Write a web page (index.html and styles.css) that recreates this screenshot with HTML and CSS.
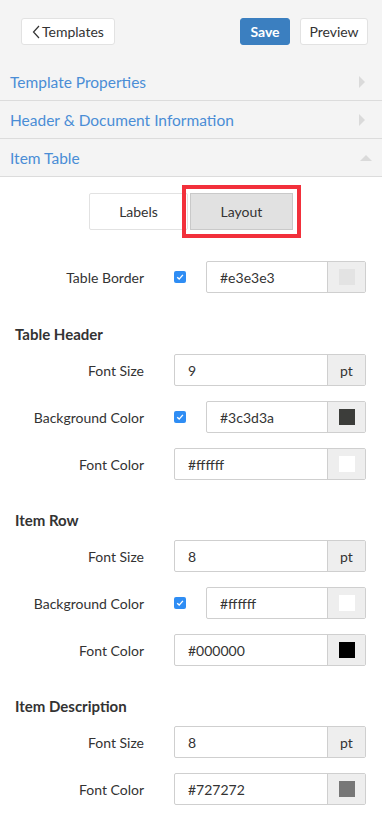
FILE: index.html
```html
<!DOCTYPE html>
<html lang="en">
<head>
    <meta charset="UTF-8">
    <meta name="viewport" content="width=device-width, initial-scale=1.0">
    <title>Item Table Layout</title>
    <link rel="stylesheet" href="styles.css">
</head>
<body>
    <!-- Top toolbar -->
    <div class="toolbar">
        <a href="#" class="btn btn-back">
            <svg width="8" height="14" viewBox="0 0 8 14"><path d="M7 1 L1.5 7 L7 13" fill="none" stroke="#333" stroke-width="1.2"/></svg>
            Templates
        </a>
        <div class="toolbar-right">
            <a href="#" class="btn btn-save">Save</a>
            <a href="#" class="btn">Preview</a>
        </div>
    </div>

    <!-- Accordion -->
    <div class="acc-row">
        <span class="acc-title">Template Properties</span>
        <span class="caret-right"></span>
    </div>
    <div class="acc-row">
        <span class="acc-title">Header &amp; Document Information</span>
        <span class="caret-right"></span>
    </div>
    <div class="acc-row">
        <span class="acc-title">Item Table</span>
        <span class="caret-up"></span>
    </div>

    <div class="panel">
        <div class="tabs">
            <button class="tab">Labels</button>
            <button class="tab active">Layout</button>
        </div>

        <div class="form-row first-row">
            <label class="field-label">Table Border</label>
            <span class="check"><svg width="8" height="8" viewBox="0 0 8 8"><path d="M1.2 4.2 L3.2 6.1 L6.9 1.9" fill="none" stroke="#fff" stroke-width="1.4"/></svg></span>
            <div class="input-group">
                <span class="input-text">#e3e3e3</span>
                <span class="addon"><span class="swatch" style="background: #e3e3e3;"></span></span>
            </div>
        </div>

        <div class="section">
            <h4 class="section-title">Table Header</h4>
            <div class="form-row">
                <label class="field-label">Font Size</label>
                <div class="input-group">
                    <span class="input-text">9</span>
                    <span class="addon">pt</span>
                </div>
            </div>
            <div class="form-row">
                <label class="field-label">Background Color</label>
                <span class="check"><svg width="8" height="8" viewBox="0 0 8 8"><path d="M1.2 4.2 L3.2 6.1 L6.9 1.9" fill="none" stroke="#fff" stroke-width="1.4"/></svg></span>
                <div class="input-group">
                    <span class="input-text">#3c3d3a</span>
                    <span class="addon"><span class="swatch" style="background: #3c3d3a;"></span></span>
                </div>
            </div>
            <div class="form-row">
                <label class="field-label">Font Color</label>
                <div class="input-group">
                    <span class="input-text">#ffffff</span>
                    <span class="addon"><span class="swatch" style="background: #ffffff;"></span></span>
                </div>
            </div>
        </div>

        <div class="section">
            <h4 class="section-title">Item Row</h4>
            <div class="form-row">
                <label class="field-label">Font Size</label>
                <div class="input-group">
                    <span class="input-text">8</span>
                    <span class="addon">pt</span>
                </div>
            </div>
            <div class="form-row">
                <label class="field-label">Background Color</label>
                <span class="check"><svg width="8" height="8" viewBox="0 0 8 8"><path d="M1.2 4.2 L3.2 6.1 L6.9 1.9" fill="none" stroke="#fff" stroke-width="1.4"/></svg></span>
                <div class="input-group">
                    <span class="input-text">#ffffff</span>
                    <span class="addon"><span class="swatch" style="background: #ffffff;"></span></span>
                </div>
            </div>
            <div class="form-row">
                <label class="field-label">Font Color</label>
                <div class="input-group">
                    <span class="input-text">#000000</span>
                    <span class="addon"><span class="swatch" style="background: #000000;"></span></span>
                </div>
            </div>
        </div>

        <div class="section">
            <h4 class="section-title">Item Description</h4>
            <div class="form-row">
                <label class="field-label">Font Size</label>
                <div class="input-group">
                    <span class="input-text">8</span>
                    <span class="addon">pt</span>
                </div>
            </div>
            <div class="form-row">
                <label class="field-label">Font Color</label>
                <div class="input-group">
                    <span class="input-text">#727272</span>
                    <span class="addon"><span class="swatch" style="background: #777777;"></span></span>
                </div>
            </div>
        </div>
    </div>
</body>
</html>
```

FILE: styles.css
```css
body {
    margin: 0;
    padding: 0;
    font-family: Lato, "Open Sans", sans-serif;
    background-color: #fff;
    color: #333;
}

/* Toolbar */
.toolbar {
    background-color: #f4f4f4;
    padding: 18px 14px 18px 21px;
    display: flex;
    justify-content: space-between;
    align-items: center;
}

.toolbar-right {
    display: flex;
    gap: 10px;
}

.btn {
    height: 27px;
    box-sizing: border-box;
    display: inline-flex;
    align-items: center;
    justify-content: center;
    padding: 0 9px;
    background-color: #fff;
    border: 1px solid #e2e2e2;
    border-radius: 3px;
    color: #333;
    text-decoration: none;
    font-size: 14px;
}

.btn-back {
    width: 94px;
    padding: 0 0 0 10px;
    justify-content: flex-start;
    gap: 2px;
}

.btn-save {
    width: 50px;
    background-color: #3b7fc0;
    border-color: #3b7fc0;
    color: #fff;
    font-weight: bold;
}

.toolbar-right .btn:last-child {
    width: 68px;
}

/* Accordion rows */
.acc-row {
    height: 37px;
    background-color: #f4f4f4;
    border-bottom: 1px solid #dcdcdc;
    display: flex;
    align-items: center;
    justify-content: space-between;
    padding: 0 16px 0 10px;
}

.acc-title {
    color: #4a8dd6;
    font-size: 15.5px;
}

.caret-right {
    width: 0;
    height: 0;
    border-top: 6px solid transparent;
    border-bottom: 6px solid transparent;
    border-left: 6px solid #dadada;
    margin-right: 1px;
}

.caret-up {
    width: 0;
    height: 0;
    border-left: 6px solid transparent;
    border-right: 6px solid transparent;
    border-bottom: 6px solid #dadada;
    margin-right: -6px;
}

/* Panel */
.panel {
    padding: 16px 16px 20px 0;
}

.tabs {
    display: flex;
    justify-content: center;
    gap: 2px;
    padding-left: 16px;
}

.tab {
    width: 99px;
    height: 37px;
    border: 1px solid #e2e2e2;
    border-radius: 2px;
    background-color: #fff;
    font-family: inherit;
    font-size: 14px;
    color: #333;
}

.tab.active {
    width: 103px;
    border-radius: 0;
    background-color: #e1e1e1;
    border-color: #c9c9c9;
    outline: 4px solid #f2303b;
    outline-offset: 4px;
}

/* Form rows */
.form-row {
    display: flex;
    align-items: center;
    height: 32px;
}

.first-row {
    margin-top: 31px;
}

.field-label {
    width: 144px;
    text-align: right;
    font-size: 14px;
    color: #333;
    margin-right: 30px;
    flex-shrink: 0;
}

.check {
    width: 12px;
    height: 12px;
    border-radius: 2px;
    background-color: #2f8df4;
    display: flex;
    align-items: center;
    justify-content: center;
    margin-right: 20px;
    flex-shrink: 0;
}

.input-group {
    flex: 1;
    height: 32px;
    box-sizing: border-box;
    border: 1px solid #cfcfcf;
    border-radius: 2px;
    display: flex;
    align-items: stretch;
    background-color: #fff;
}

.input-text {
    flex: 1;
    display: flex;
    align-items: center;
    padding-left: 13px;
    font-size: 14px;
    color: #333;
}

.addon {
    width: 37px;
    background-color: #eeeeee;
    border-left: 1px solid #cfcfcf;
    display: flex;
    align-items: center;
    justify-content: center;
    font-size: 14px;
    color: #333;
}

.swatch {
    width: 16px;
    height: 16px;
}

/* Sections */
.section {
    display: flex;
    flex-direction: column;
    gap: 15px;
    margin-top: 30px;
}

.first-row + .section {
    margin-top: 31px;
}

.section-title {
    margin: 0 0 -5px 15px;
    font-size: 15px;
    font-weight: bold;
    line-height: 20px;
    color: #333;
}
```
